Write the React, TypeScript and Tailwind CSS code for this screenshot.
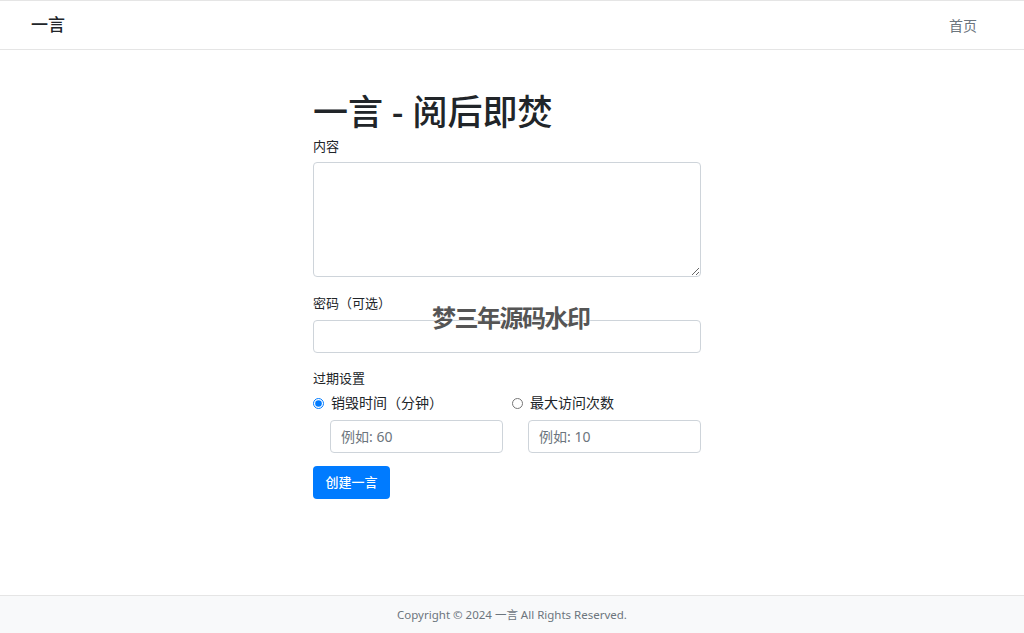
const F = { fontFamily: '"Noto Sans","Noto Sans CJK SC",sans-serif' };
export default function App() {
  return (
    <div style={F} className="min-h-[633px] flex flex-col bg-white text-[#212529] relative">
      <nav className="h-[50px] border-t border-b border-[#e5e5e5] flex items-center justify-between px-[31px]">
        <span className="text-[17px] font-medium">一言</span>
        <span className="text-[14px] text-[#6c757d] mr-[16px]">首页</span>
      </nav>
      <main className="flex-1 flex justify-center pr-[10px]">
        <div className="w-[388px] pt-[40px]">
          <h1 className="text-[35px] leading-[44px] font-medium mb-[2px]">一言 - 阅后即焚</h1>
          <label className="block text-[13px] leading-[20px] mb-[6px]">内容</label>
          <textarea className="block w-full h-[115px] border border-[#ced4da] rounded-[4px] mb-[16px]" />
          <label className="block text-[13px] leading-[20px] mb-[7px]">密码（可选）</label>
          <input className="block w-full h-[33px] border border-[#ced4da] rounded-[4px] mb-[15px]" />
          <label className="block text-[13px] leading-[20px] mb-[5px]">过期设置</label>
          <div className="grid grid-cols-2 gap-[10px]">
            <div>
              <label className="flex items-center gap-[7px] text-[14px] leading-[20px] mb-[7px]">
                <input type="radio" name="r" defaultChecked className="w-[11px] h-[11px] accent-[#007bff]" />销毁时间（分钟）
              </label>
              <input placeholder="例如: 60" className="ml-[17px] w-[173px] h-[33px] border border-[#ced4da] rounded-[4px] px-[10px] text-[14px] placeholder-[#6c757d]" />
            </div>
            <div>
              <label className="flex items-center gap-[7px] text-[14px] leading-[20px] mb-[7px]">
                <input type="radio" name="r" className="w-[11px] h-[11px]" />最大访问次数
              </label>
              <input placeholder="例如: 10" className="ml-[16px] w-[173px] h-[33px] border border-[#ced4da] rounded-[4px] px-[10px] text-[14px] placeholder-[#6c757d]" />
            </div>
          </div>
          <button className="mt-[13px] h-[33px] w-[77px] bg-[#007bff] text-white text-[13px] font-medium rounded-[4px]">创建一言</button>
        </div>
      </main>
      <footer className="h-[38px] bg-[#f8f9fa] border-t border-[#e5e5e5] flex items-center justify-center text-[11.5px] text-[#6c757d]">
        Copyright © 2024 一言 All Rights Reserved.
      </footer>
      <div className="absolute left-[432px] top-[299px] text-[24px] font-bold text-[#555] leading-[38px] tracking-[-1.5px]" style={{ textShadow: '0 0 2px #fff' }}>梦三年源码水印</div>
    </div>
  );
}
